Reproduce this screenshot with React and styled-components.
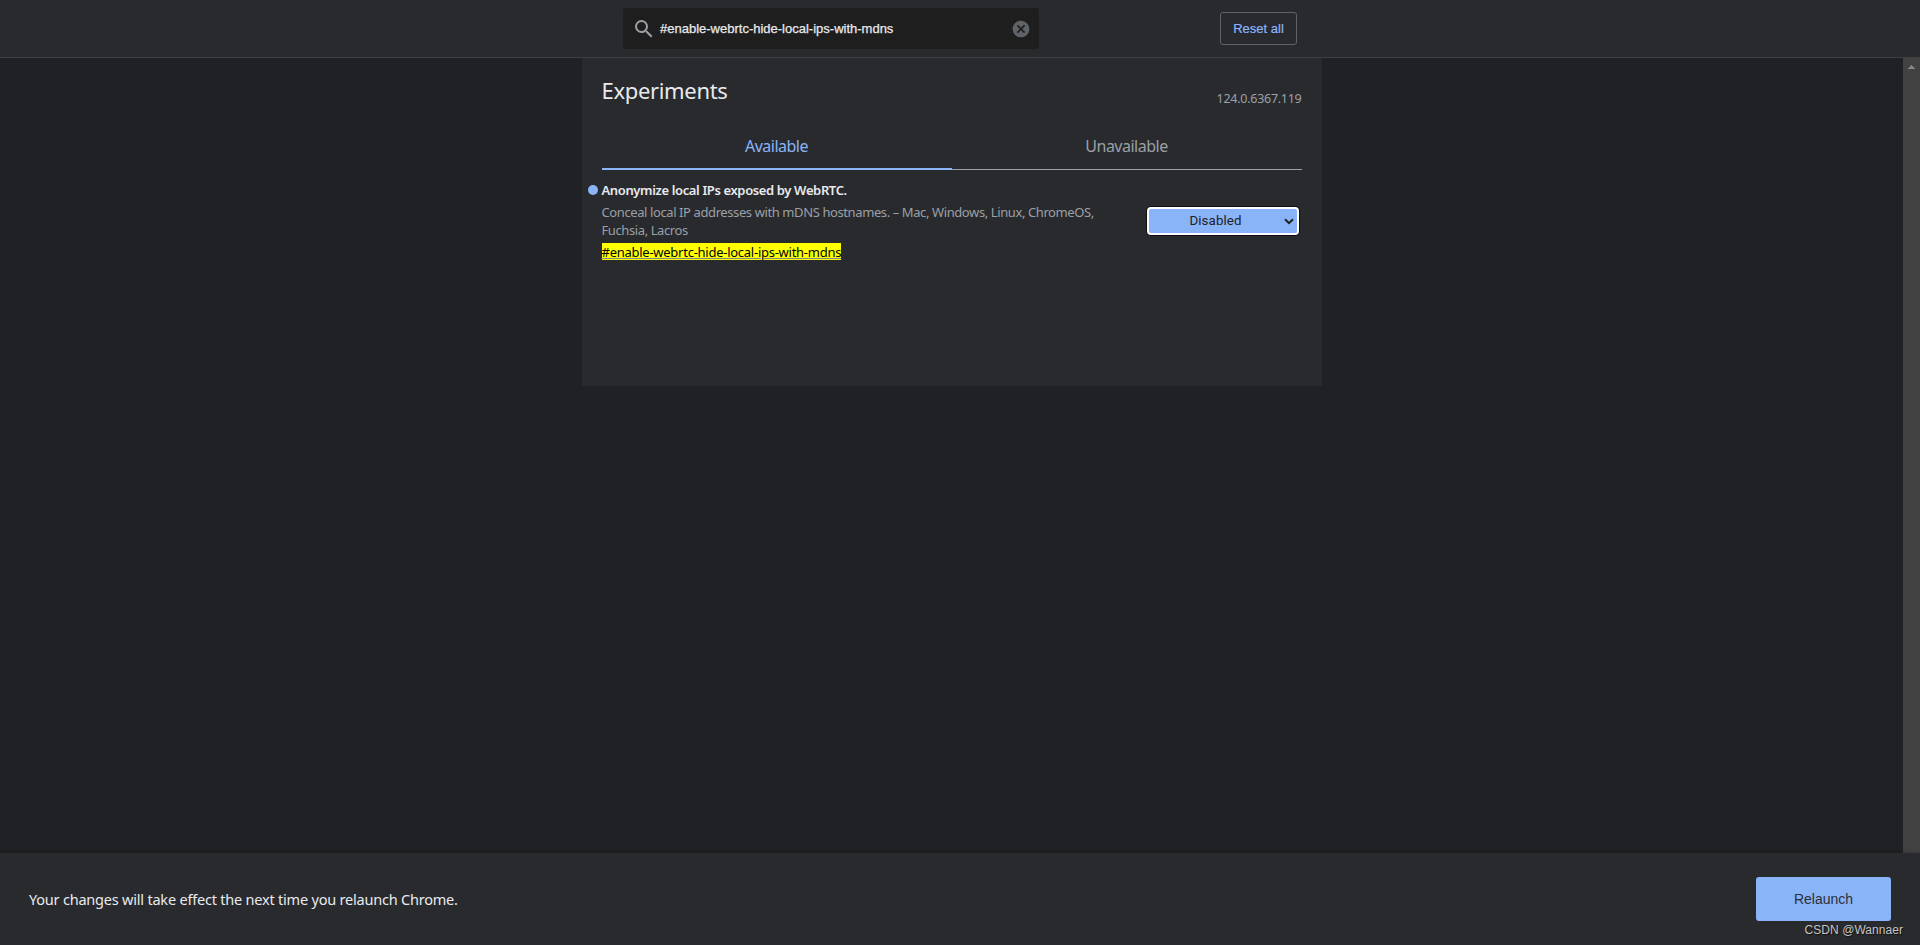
import styled, { createGlobalStyle } from "styled-components";

const GlobalStyle = createGlobalStyle`
  * {
    box-sizing: border-box;
  }
  body {
    margin: 0;
    background: #202124;
    color: #e8eaed;
    font-family: "Noto Sans", "Open Sans", sans-serif;
    font-size: 13px;
    overflow: hidden;
  }
  button {
    font-family: "Liberation Sans", Arial, sans-serif;
    padding: 0;
    cursor: pointer;
  }
`;

function App() {
  return (
    <PageStyled>
      <GlobalStyle />
      <HeaderStyled>
        <SearchStyled>
          <SearchIcon viewBox="0 0 24 24">
            <path d="M15.5 14h-.79l-.28-.27A6.471 6.471 0 0 0 16 9.5 6.5 6.5 0 1 0 9.5 16c1.61 0 3.09-.59 4.23-1.57l.27.28v.79l5 4.99L20.49 19l-4.99-5zm-6 0C7.01 14 5 11.99 5 9.5S7.01 5 9.5 5 14 7.01 14 9.5 11.99 14 9.5 14z" />
          </SearchIcon>
          <SearchText>#enable-webrtc-hide-local-ips-with-mdns</SearchText>
          <ClearIcon viewBox="0 0 24 24">
            <path d="M12 2C6.47 2 2 6.47 2 12s4.47 10 10 10 10-4.47 10-10S17.53 2 12 2zm5 13.59L15.59 17 12 13.41 8.41 17 7 15.59 10.59 12 7 8.41 8.41 7 12 10.59 15.59 7 17 8.41 13.41 12 17 15.59z" />
          </ClearIcon>
        </SearchStyled>
        <ResetButton>Reset all</ResetButton>
      </HeaderStyled>

      <BodyStyled>
        <MainStyled>
          <ContentStyled>
            <TitleRow>
              <Title>Experiments</Title>
              <Version>124.0.6367.119</Version>
            </TitleRow>
            <Tabs>
              <Tab $active>Available</Tab>
              <Tab>Unavailable</Tab>
            </Tabs>
            <Experiment>
              <Dot />
              <Details>
                <Name>Anonymize local IPs exposed by WebRTC.</Name>
                <Description>
                  Conceal local IP addresses with mDNS hostnames. – Mac, Windows, Linux, ChromeOS,
                  <br />
                  Fuchsia, Lacros
                </Description>
                <Permalink>
                  <mark>#enable-webrtc-hide-local-ips-with-mdns</mark>
                </Permalink>
              </Details>
              <Select>
                <span>Disabled</span>
                <svg viewBox="0 0 10 7">
                  <path d="M1 1.2 5 5.2 9 1.2" />
                </svg>
              </Select>
            </Experiment>
          </ContentStyled>
        </MainStyled>
        <Scrollbar>
          <svg viewBox="0 0 7 4">
            <path d="M3 0h1v1h1v1h1v1h1v1H0V3h1V2h1V1h1z" />
          </svg>
        </Scrollbar>
      </BodyStyled>

      <FooterStyled>
        <RestartText>Your changes will take effect the next time you relaunch Chrome.</RestartText>
        <RelaunchButton>Relaunch</RelaunchButton>
        <Watermark>CSDN @Wannaer</Watermark>
      </FooterStyled>
    </PageStyled>
  );
}

const PageStyled = styled.div`
  height: 945px;
  display: flex;
  flex-direction: column;
`;

const HeaderStyled = styled.header`
  height: 58px;
  flex: none;
  display: flex;
  justify-content: space-between;
  align-items: center;
  padding: 0 623px;
  background: #292a2d;
  border-bottom: 1px solid #3f4042;
`;

const SearchStyled = styled.div`
  width: 416px;
  height: 41px;
  flex: none;
  display: flex;
  align-items: center;
  padding: 0 8px 0 9px;
  border-radius: 3px;
  background: #1e1e1f;
`;

const SearchIcon = styled.svg`
  width: 24px;
  height: 24px;
  fill: #9aa0a6;
`;

const SearchText = styled.span`
  flex: 1;
  margin-left: 4px;
  font: 13px "Liberation Sans", Arial, sans-serif;
  -webkit-text-stroke: 0.25px #e8eaed;
`;

const ClearIcon = styled.svg`
  width: 20px;
  height: 20px;
  fill: #5f6368;
`;

const ResetButton = styled.button`
  width: 77px;
  height: 33px;
  flex: none;
  border: 1px solid #5f6368;
  border-radius: 3px;
  background: transparent;
  color: #8ab4f8;
  font-size: 13px;
  -webkit-text-stroke: 0.2px #8ab4f8;
`;

const BodyStyled = styled.div`
  flex: 1;
  display: flex;
`;

const MainStyled = styled.main`
  flex: 1;
  display: flex;
  justify-content: center;
  align-items: flex-start;
`;

const ContentStyled = styled.div`
  width: 740px;
  height: 328px;
  padding: 15px 20px 0;
  background: #292a2d;
`;

const TitleRow = styled.div`
  height: 50px;
  display: flex;
  justify-content: space-between;
`;

const Title = styled.h1`
  margin: 0;
  font-size: 22px;
  font-weight: 400;
  line-height: 34px;
  letter-spacing: -0.33px;
`;

const Version = styled.span`
  margin-top: 17px;
  color: #9aa0a6;
  font-size: 12.5px;
  line-height: 18px;
  letter-spacing: -0.27px;
`;

const Tabs = styled.div`
  height: 47px;
  display: flex;
  align-items: flex-end;
`;

const Tab = styled.div`
  flex: 1;
  height: 47px;
  text-align: center;
  font-size: 16px;
  line-height: 46px;
  letter-spacing: -0.5px;
  color: ${(props) => (props.$active ? "#8ab4f8" : "#9aa0a6")};
  border-bottom: ${(props) => (props.$active ? "2px solid #8ab4f8" : "1px solid #9aa0a6")};
`;

const Experiment = styled.div`
  display: flex;
  margin-left: -14px;
  padding-top: 11px;
`;

const Dot = styled.div`
  width: 10px;
  height: 10px;
  flex: none;
  margin: 4px 4px 0 0;
  border-radius: 50%;
  background: #8ab4f8;
`;

const Details = styled.div`
  flex: 1;
  white-space: nowrap;
`;

const Name = styled.h2`
  margin: 0;
  font-size: 13px;
  font-weight: 600;
  line-height: 18px;
  letter-spacing: -0.37px;
`;

const Description = styled.p`
  margin: 4px 0;
  color: #9aa0a6;
  font-size: 13px;
  line-height: 18px;
  letter-spacing: -0.4px;
`;

const Permalink = styled.a`
  display: block;
  font-size: 13px;
  line-height: 18px;
  letter-spacing: -0.26px;
  mark {
    display: inline-block;
    height: 17px;
    line-height: 19px;
    background: #ff0;
    color: #000;
    text-decoration: underline 1px #80868b;
    text-underline-offset: 1px;
  }
`;

const Select = styled.button`
  width: 152px;
  height: 28px;
  flex: none;
  display: flex;
  align-items: center;
  margin: 26px 3px 0 0;
  padding: 0 3px 0 0;
  border: 2px solid #fff;
  border-radius: 4px;
  background: #8ab4f8;
  box-shadow: 0 0 0 1px #101010;
  color: #202124;
  font: 13.33px Roboto, sans-serif;
  span {
    flex: 1;
    padding: 0 1px 1px 0;
    text-align: center;
    letter-spacing: 0.1px;
  }
  svg {
    width: 10px;
    height: 7px;
    fill: none;
    stroke: #202124;
    stroke-width: 2;
  }
`;

const Scrollbar = styled.div`
  width: 17px;
  display: flex;
  justify-content: center;
  padding-top: 7px;
  background: #424242;
  svg {
    width: 7px;
    height: 4px;
    fill: #868686;
  }
`;

const FooterStyled = styled.footer`
  position: relative;
  height: 92px;
  flex: none;
  display: flex;
  justify-content: space-between;
  align-items: center;
  padding: 0 29px;
  background: #292a2d;
  box-shadow: 0 -1px 3px rgba(0, 0, 0, 0.2);
`;

const RestartText = styled.span`
  font-size: 14.5px;
  letter-spacing: -0.21px;
`;

const RelaunchButton = styled.button`
  width: 135px;
  height: 44px;
  border: none;
  border-radius: 3px;
  background: #8ab4f8;
  color: #2d3036;
  font-size: 14px;
`;

const Watermark = styled.span`
  position: absolute;
  right: 17px;
  bottom: 7px;
  color: #c4c4c5;
  font: 12px/15px "Liberation Sans", Arial, sans-serif;
  letter-spacing: 0.05px;
  text-shadow: 1px 1px 1px #111;
`;

export default App;
